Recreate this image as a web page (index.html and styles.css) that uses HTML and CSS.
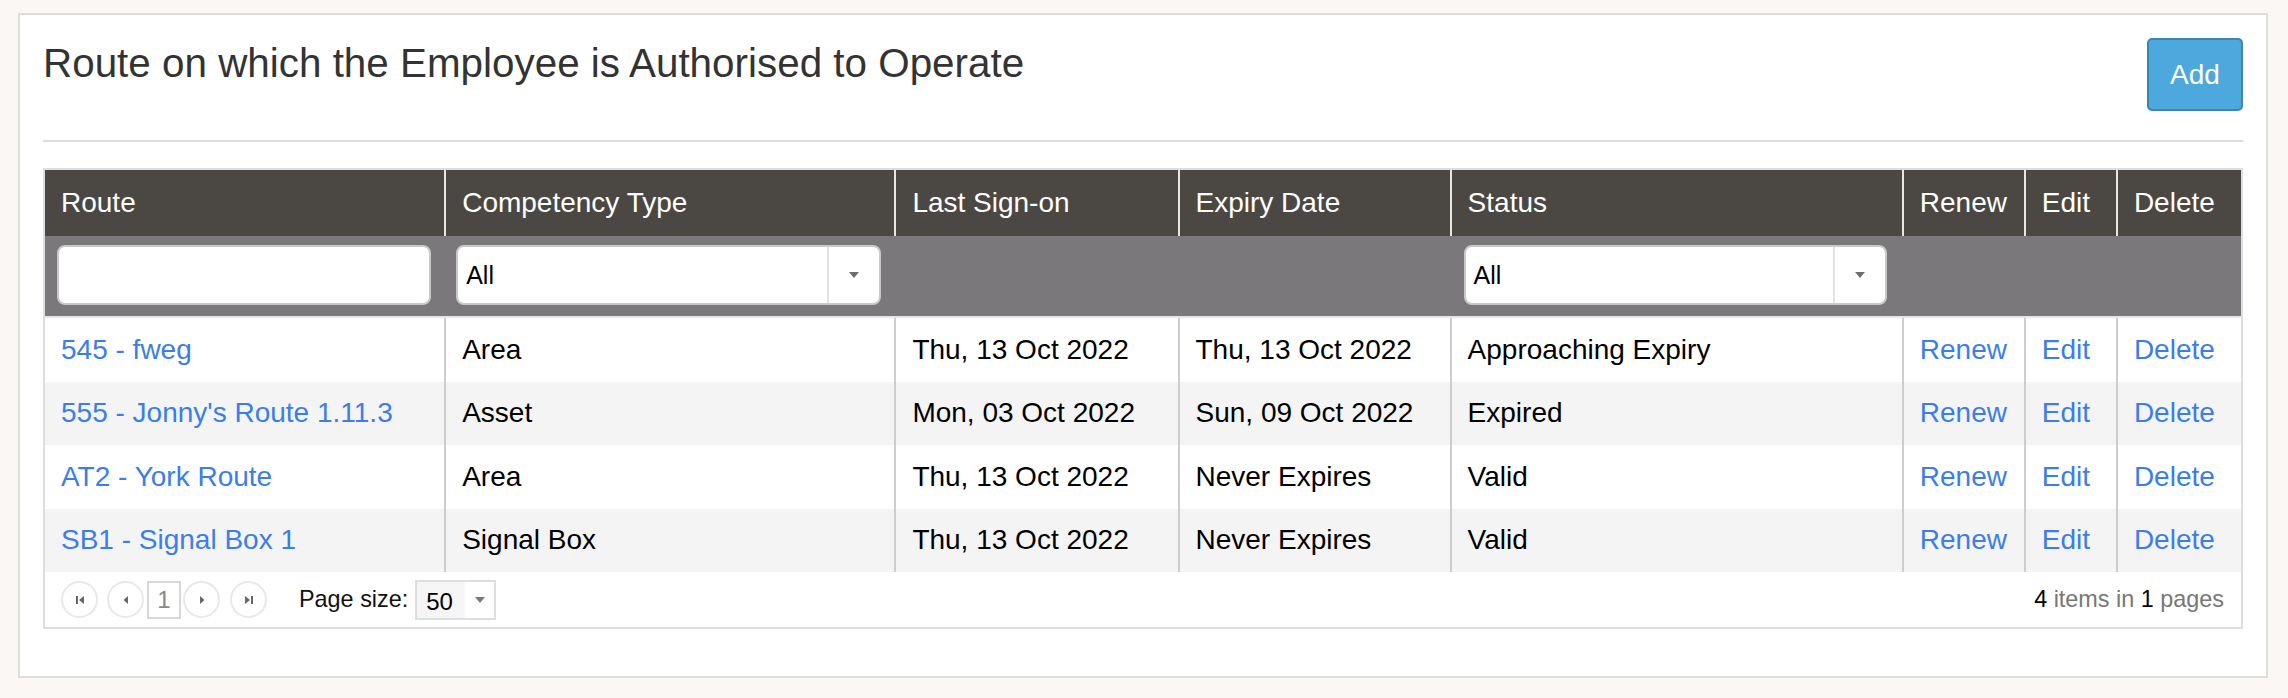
FILE: index.html
```html
<!DOCTYPE html>
<html lang="en">
<head>
<meta charset="utf-8">
<title>Route on which the Employee is Authorised to Operate</title>
<link rel="stylesheet" href="styles.css">
</head>
<body>
<div class="panel">
  <div class="panel-head">
    <h3 class="title">Route on which the Employee is Authorised to Operate</h3>
    <button class="btn-add" type="button">Add</button>
  </div>
  <hr class="rule">
  <div class="grid">
    <table class="grid-table">
      <colgroup>
        <col class="c-route"><col class="c-comp"><col class="c-last"><col class="c-exp"><col class="c-status"><col class="c-renew"><col class="c-edit"><col class="c-del">
      </colgroup>
      <thead>
        <tr class="head-row">
          <th>Route</th><th>Competency Type</th><th>Last Sign-on</th><th>Expiry Date</th><th>Status</th><th>Renew</th><th>Edit</th><th>Delete</th>
        </tr>
        <tr class="filter-row">
          <td><div class="text-input"></div></td>
          <td><div class="dd"><span class="dd-val">All</span><span class="dd-btn"><svg width="12" height="8" viewBox="0 0 12 8"><path d="M1 1h10L6 7z" fill="#6e6e6e"/></svg></span></div></td>
          <td></td>
          <td></td>
          <td><div class="dd"><span class="dd-val">All</span><span class="dd-btn"><svg width="12" height="8" viewBox="0 0 12 8"><path d="M1 1h10L6 7z" fill="#6e6e6e"/></svg></span></div></td>
          <td></td><td></td><td></td>
        </tr>
      </thead>
      <tbody>
        <tr>
          <td><a href="#">545 - fweg</a></td><td>Area</td><td>Thu, 13 Oct 2022</td><td>Thu, 13 Oct 2022</td><td>Approaching Expiry</td><td><a href="#">Renew</a></td><td><a href="#">Edit</a></td><td><a href="#">Delete</a></td>
        </tr>
        <tr class="alt">
          <td><a href="#">555 - Jonny's Route 1.11.3</a></td><td>Asset</td><td>Mon, 03 Oct 2022</td><td>Sun, 09 Oct 2022</td><td>Expired</td><td><a href="#">Renew</a></td><td><a href="#">Edit</a></td><td><a href="#">Delete</a></td>
        </tr>
        <tr>
          <td><a href="#">AT2 - York Route</a></td><td>Area</td><td>Thu, 13 Oct 2022</td><td>Never Expires</td><td>Valid</td><td><a href="#">Renew</a></td><td><a href="#">Edit</a></td><td><a href="#">Delete</a></td>
        </tr>
        <tr class="alt">
          <td><a href="#">SB1 - Signal Box 1</a></td><td>Signal Box</td><td>Thu, 13 Oct 2022</td><td>Never Expires</td><td>Valid</td><td><a href="#">Renew</a></td><td><a href="#">Edit</a></td><td><a href="#">Delete</a></td>
        </tr>
      </tbody>
    </table>
    <div class="pager">
      <div class="pager-nav">
        <span class="pg-btn pg-first"><svg width="14" height="14" viewBox="0 0 14 14"><rect x="3" y="3" width="2" height="8" fill="#666"/><path d="M11 3v8L6 7z" fill="#666"/></svg></span>
        <span class="pg-btn pg-prev"><svg width="14" height="14" viewBox="0 0 14 14"><path d="M9 3v8L4.5 7z" fill="#666"/></svg></span>
        <span class="pg-num">1</span>
        <span class="pg-btn pg-next"><svg width="14" height="14" viewBox="0 0 14 14"><path d="M5 3v8L9.5 7z" fill="#666"/></svg></span>
        <span class="pg-btn pg-last"><svg width="14" height="14" viewBox="0 0 14 14"><path d="M3 3v8L8 7z" fill="#666"/><rect x="9" y="3" width="2" height="8" fill="#666"/></svg></span>
        <span class="pg-size-label">Page size:</span>
        <span class="pg-size"><span class="pg-size-val">50</span><span class="pg-size-btn"><svg width="12" height="8" viewBox="0 0 12 8"><path d="M1 1h10L6 7z" fill="#7a7a7a"/></svg></span></span>
      </div>
      <div class="pager-info"><b>4</b> items in <b>1</b> pages</div>
    </div>
  </div>
</div>
</body>
</html>
```

FILE: styles.css
```css
* { box-sizing: border-box; }

html, body {
  margin: 0;
  padding: 0;
}

body {
  background: #faf7f4;
  font-family: "Liberation Sans", Arial, "Helvetica Neue", Helvetica, sans-serif;
  color: #000;
  width: 2288px;
  height: 698px;
  overflow: hidden;
}

.panel {
  margin: 13px 20px 0 18px;
  height: 665px;
  background: #fff;
  border: 2px solid #dfddda;
  padding: 23px 23px 0 23px;
}

.panel-head {
  display: flex;
  justify-content: space-between;
  align-items: flex-start;
}

.title {
  margin: 3px 0 0 0;
  font-size: 40.4px;
  line-height: 44px;
  font-weight: normal;
  color: #333;
}

.btn-add {
  width: 96px;
  height: 73px;
  background: #4da8dd;
  border: 2px solid #3a86b4;
  border-radius: 5px;
  color: #fff;
  font-family: inherit;
  font-size: 28px;
  padding: 0;
}

.rule {
  margin: 29px 0 0 0;
  border: 0;
  border-top: 2px solid #dcdcdc;
  height: 0;
}

.grid {
  margin-top: 26px;
  border: 2px solid #dcdfe2;
}

.grid-table {
  width: 100%;
  table-layout: fixed;
  border-collapse: separate;
  border-spacing: 0;
  font-size: 28px;
}

.c-route { width: 399px; }
.c-comp { width: 450px; }
.c-last { width: 283px; }
.c-exp { width: 272px; }
.c-status { width: 452px; }
.c-renew { width: 122px; }
.c-edit { width: 92px; }
.c-del { width: 125px; }

.head-row th {
  background: #4b4844;
  color: #fff;
  font-weight: normal;
  text-align: left;
  height: 66px;
  padding: 0 16px;
  vertical-align: middle;
  white-space: nowrap;
}

.head-row th + th {
  border-left: 2px solid #e9e7e4;
}

.filter-row td {
  background: #7a787a;
  height: 82px;
  padding: 9px 13px 11px 12px;
  vertical-align: top;
  border-bottom: 2px solid #e6e6e6;
}

.filter-row td:nth-child(5) {
  padding-left: 14px;
  padding-right: 15px;
}

.text-input {
  height: 60px;
  background: #fff;
  border: 2px solid #c9c9c9;
  border-radius: 8px;
}

.dd {
  display: flex;
  height: 60px;
  background: #fff;
  border: 2px solid #c9c9c9;
  border-radius: 8px;
  font-size: 25px;
}

.dd-val {
  flex: 1;
  padding: 14px 0 0 8px;
}

.dd-btn {
  width: 52px;
  border-left: 2px solid #e3e3e3;
  display: flex;
  align-items: center;
  justify-content: center;
}

tbody td {
  height: 63.5px;
  padding: 0 16px;
  vertical-align: middle;
  white-space: nowrap;
}

tbody td + td {
  border-left: 2px solid #cdcdcd;
}

tbody tr.alt td {
  background: #f4f4f4;
}

a {
  color: #3b7ded;
  text-decoration: none;
}

.pager {
  height: 55px;
  display: flex;
  align-items: center;
  justify-content: space-between;
  padding: 0 17px 0 16px;
  font-size: 23.4px;
}

.pager-nav {
  display: flex;
  align-items: center;
}

.pg-btn {
  width: 37px;
  height: 37px;
  border: 2px solid #e8e8e8;
  border-radius: 50%;
  display: flex;
  align-items: center;
  justify-content: center;
}

.pg-prev { margin-left: 9px; }
.pg-next { margin-left: 2px; }
.pg-last { margin-left: 10px; }

.pg-num {
  margin-left: 3px;
  width: 34px;
  height: 38px;
  border: 2px solid #d9d9d9;
  color: #888;
  font-size: 24px;
  display: flex;
  align-items: center;
  justify-content: center;
}

.pg-size-label {
  margin-left: 32px;
  color: #111;
}

.pg-size {
  margin-left: 7px;
  width: 81px;
  height: 40px;
  border: 2px solid #dcdfe2;
  display: flex;
}

.pg-size-val {
  width: 48px;
  background: #f6f6f6;
  font-size: 24px;
  padding: 6px 0 0 9px;
}

.pg-size-btn {
  flex: 1;
  display: flex;
  align-items: center;
  justify-content: center;
}

.pager-info {
  color: #777;
}

.pager-info b {
  color: #000;
  font-weight: normal;
}
```
